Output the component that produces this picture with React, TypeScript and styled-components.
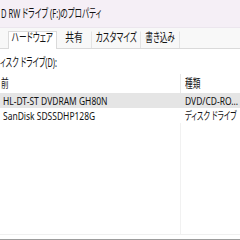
import React from "react";
import styled, { createGlobalStyle } from "styled-components";

const Global = createGlobalStyle`
  html, body { margin: 0; padding: 0; background: #f3f3f3; }
  body { width: 240px; height: 240px; overflow: hidden; }
  * { box-sizing: border-box; }
`;

const FONT = `"Noto Sans", "Noto Sans CJK JP", sans-serif`;

const Window = styled.div`
  width: 240px;
  height: 240px;
  display: flex;
  flex-direction: column;
  font-family: ${FONT};
  font-size: 12px;
  line-height: 14px;
  color: #121212;
  font-feature-settings: "palt";
  overflow: hidden;
`;

/* The dialog's UI font is a narrow one; the Noto faces are condensed to its width. */
const Text = styled.span<{ $center?: boolean; $sx?: number }>`
  display: inline-block;
  flex: none;
  white-space: nowrap;
  transform: scaleX(${(p) => p.$sx ?? 0.64});
  transform-origin: ${(p) => (p.$center ? "center" : "left")} center;
`;

const TitleBar = styled.div`
  height: 27px;
  flex: none;
  display: flex;
  align-items: center;
  padding: 1px 0 0 1px;
  background: #f5eff6;
`;

const TabStrip = styled.div`
  height: 21px;
  flex: none;
  display: flex;
  align-items: flex-end;
  padding-left: 8px;
  background: #f8f8f8;
  border-top: 1px solid #ece6ee;
  position: relative;
  z-index: 1;
`;

const Tab = styled.div<{ $active?: boolean; $w: number }>`
  width: ${(p) => p.$w}px;
  flex: none;
  height: ${(p) => (p.$active ? 18 : 17)}px;
  display: flex;
  align-items: center;
  justify-content: center;
  padding-bottom: ${(p) => (p.$active ? 5 : 4)}px;
  background: ${(p) => (p.$active ? "#ffffff" : "#f8f8f8")};
  border: 1px solid ${(p) => (p.$active ? "#dadada" : "transparent")};
  border-bottom: none;
  border-right: 1px solid ${(p) => (p.$active ? "#dadada" : "#e4e4e4")};
  margin-bottom: ${(p) => (p.$active ? -1 : 0)}px;
`;

const Panel = styled.div`
  flex: 1;
  display: flex;
  flex-direction: column;
  background: #ffffff;
  border-top: 1px solid #dadada;
  border-bottom: 1px solid #9c9c9c;
  padding-bottom: 4px;
`;

const Label = styled.div`
  height: 25px;
  flex: none;
  display: flex;
  align-items: center;
  padding-top: 2px;
`;

const List = styled.div`
  flex: 1;
  display: flex;
  flex-direction: column;
  border-bottom: 1px solid #f0f0f0;
`;

const Row = styled.div<{ $selected?: boolean; $header?: boolean }>`
  display: grid;
  grid-template-columns: 181px 1fr;
  height: ${(p) => (p.$header ? 19 : 15)}px;
  flex: none;
  font-size: ${(p) => (p.$header ? 12 : 11)}px;
  line-height: 13px;
  background: ${(p) => (p.$selected ? "#e5e5e5" : "transparent")};
`;

const Cell = styled.div<{ $pad: number; $header?: boolean; $lift?: number }>`
  display: flex;
  align-items: center;
  min-width: 0;
  padding-left: ${(p) => p.$pad}px;
  padding-bottom: ${(p) => p.$lift ?? 0}px;
  border-right: ${(p) => (p.$header ? "1px solid #e8e8e8" : "none")};
`;

const Body = styled.div`
  flex: 1;
  display: grid;
  grid-template-columns: 181px 1fr;
`;

const ColumnLine = styled.div`
  border-right: 1px solid #f1f1f1;
`;

export default function App() {
  return (
    <>
      <Global />
      <Window>
        <TitleBar>
          <Text $sx={0.63}>D RW ドライブ (F:)のプロパティ</Text>
        </TitleBar>
        <TabStrip>
          <Tab $active $w={49}><Text $center>ハードウェア</Text></Tab>
          <Tab $w={35}><Text $center $sx={0.73}>共有</Text></Tab>
          <Tab $w={49}><Text $center>カスタマイズ</Text></Tab>
          <Tab $w={39}><Text $center>書き込み</Text></Tab>
        </TabStrip>
        <Panel>
          <Label><Text $sx={0.605}>ィスク ドライブ(D):</Text></Label>
          <List>
            <Row $header>
              <Cell $pad={1} $header><Text>前</Text></Cell>
              <Cell $pad={4}><Text>種類</Text></Cell>
            </Row>
            <Row $selected>
              <Cell $pad={3} $lift={1}><Text $sx={0.77}>HL-DT-ST DVDRAM GH80N</Text></Cell>
              <Cell $pad={4} $lift={1}><Text $sx={0.77}>DVD/CD-RO...</Text></Cell>
            </Row>
            <Row>
              <Cell $pad={3} $lift={1}><Text $sx={0.77}>SanDisk SDSSDHP128G</Text></Cell>
              <Cell $pad={4} $lift={1}><Text $sx={0.66}>ディスク ドライブ</Text></Cell>
            </Row>
            <Body>
              <ColumnLine />
              <div />
            </Body>
          </List>
        </Panel>
      </Window>
    </>
  );
}
